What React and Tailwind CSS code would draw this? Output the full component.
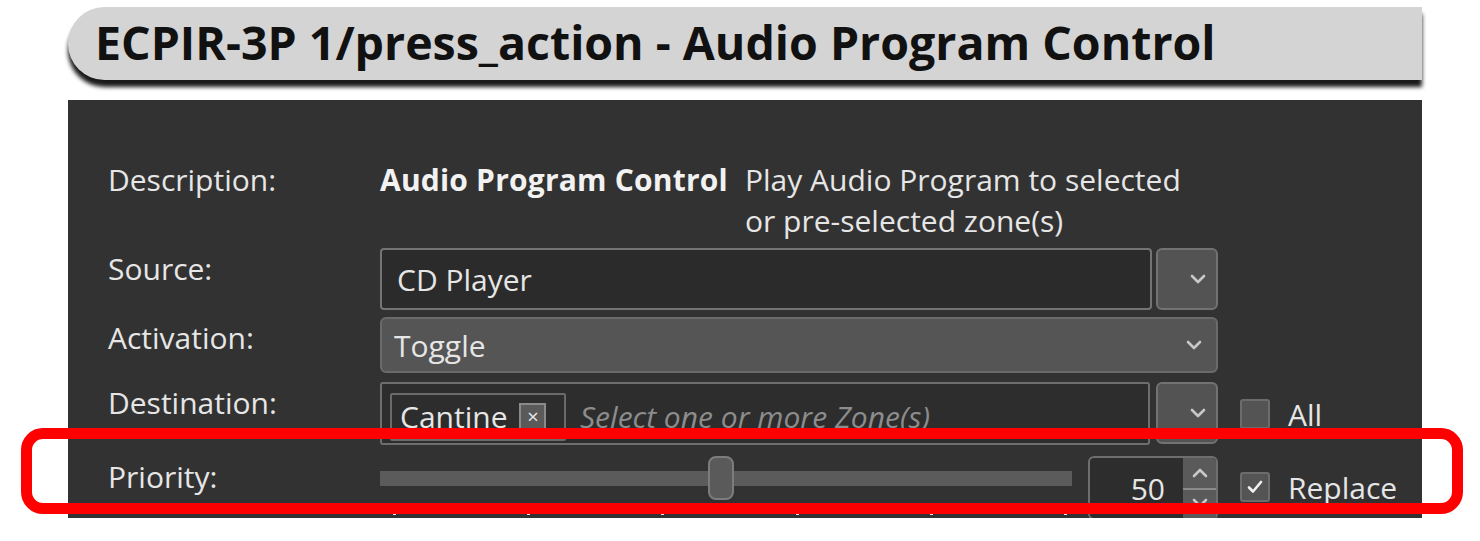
import { useState } from 'react';

const uiFont = { fontFamily: '"Open Sans", "Noto Sans", sans-serif' }

function Chevron() {
  return (
    <svg width="16" height="10" viewBox="0 0 16 10" fill="none">
      <path d="M2 2 L8 8 L14 2" stroke="#c8c8c8" strokeWidth="2.6" strokeLinecap="round" strokeLinejoin="round" />
    </svg>
  )
}

function DropButton() {
  return (
    <div className="w-[62px] h-[62px] shrink-0 rounded-[6px] border-2 border-[#727272] bg-[#535353] flex items-center justify-center pl-[22px]">
      <Chevron />
    </div>
  )
}

function Checkbox({ checked }) {
  return (
    <div className="w-[30px] h-[30px] shrink-0 rounded-[3px] border-2 border-[#6c6c6c] bg-[#545454] flex items-center justify-center">
      {checked && (
        <svg width="18" height="16" viewBox="0 0 18 16" fill="none">
          <path d="M3 8.5 L7 12.5 L15 3" stroke="#f0f0f0" strokeWidth="2.6" strokeLinecap="round" strokeLinejoin="round" />
        </svg>
      )}
    </div>
  )
}

export default function App() {
  const [prioridad] = useState(50)
  const ticks = [0, 1, 2, 3, 4, 5]

  return (
    <div className="w-[1480px] h-[541px] bg-white relative overflow-hidden" style={uiFont}>
      {/* cabecera */}
      <div className="pt-[7px] pl-[68px]">
        <div className="w-[1354px] h-[73px] bg-[#d4d4d4] rounded-l-[38px] shadow-[0_7px_4px_rgba(0,0,0,0.9)] flex items-center pl-[27px]">
          <h1 className="text-[46.5px] font-bold text-[#111] leading-none pb-[2px] whitespace-nowrap">
            ECPIR-3P 1/press_action - Audio Program Control
          </h1>
        </div>
      </div>

      {/* panel */}
      <div className="ml-[68px] mt-[20px] w-[1354px] h-[418px] bg-[#323232] overflow-hidden pl-[40px] pt-[59px] text-[30px] text-[#e6e6e6] leading-[41px] whitespace-nowrap">
        {/* Description */}
        <div className="flex">
          <div className="w-[272px] shrink-0">Description:</div>
          <div className="font-bold text-[#f2f2f2] w-[365px] shrink-0 tracking-[0.2px]">Audio Program Control</div>
          <div className="leading-[41px]">
            Play Audio Program to selected<br />or pre-selected zone(s)
          </div>
        </div>

        {/* Source */}
        <div className="flex mt-[7px]">
          <div className="w-[272px] shrink-0">Source:</div>
          <div className="w-[838px] flex gap-[4px]">
            <div className="flex-1 h-[62px] rounded-[4px] border-2 border-[#747474] bg-[#2b2b2b] flex items-center pl-[15px]">CD Player</div>
            <DropButton />
          </div>
        </div>

        {/* Activation */}
        <div className="flex mt-[7px]">
          <div className="w-[272px] shrink-0">Activation:</div>
          <div className="w-[838px] h-[56px] rounded-[6px] border-2 border-[#6a6a6a] bg-[#555555] flex items-center justify-between pl-[12px] pr-[14px]">
            <span>Toggle</span>
            <Chevron />
          </div>
        </div>

        {/* Destination */}
        <div className="flex mt-[9px]">
          <div className="w-[272px] shrink-0">Destination:</div>
          <div className="w-[838px] flex gap-[6px]">
            <div className="flex-1 h-[63px] rounded-[3px] border-2 border-[#6e6e6e] bg-[#2d2d2d] flex items-center pl-[8px] gap-[14px]">
              <div className="h-[48px] w-[176px] border-2 border-[#6a6a6a] rounded-[2px] flex items-center pl-[8px] gap-[12px] mt-[6px]">
                <span>Cantine</span>
                <span className="w-[27px] h-[27px] border-2 border-[#8a8a8a] bg-[#5a5a5a] flex items-center justify-center text-[20px] leading-none text-[#e8e8e8]">×</span>
              </div>
              <span className="italic text-[#8c8c8c] mt-[6px]">Select one or more Zone(s)</span>
            </div>
            <DropButton />
          </div>
          <div className="flex items-center gap-[18px] ml-[22px] mt-[16px] h-[32px]">
            <Checkbox />
            <span>All</span>
          </div>
        </div>

        {/* Priority */}
        <div className="flex mt-[11px]">
          <div className="w-[272px] shrink-0">Priority:</div>
          <div className="w-[838px] flex gap-[16px]">
            <div className="w-[692px] relative h-[61px]">
              <div className="absolute left-0 right-0 top-[15px] h-[15px] bg-[#5b5b5b]" />
              <div className="absolute left-[328px] top-0 w-[26px] h-[44px] rounded-[8px] border-2 border-[#7c7c7c] bg-[#5a5a5a]" />
              <div className="absolute left-[13px] right-[5px] top-[56px] flex justify-between">
                {ticks.map((t) => (
                  <span key={t} className="w-[3px] h-[3px] bg-[#e8e8e8]" />
                ))}
              </div>
            </div>
            <div className="w-[130px] h-[64px] rounded-[6px] border-2 border-[#6e6e6e] bg-[#2d2d2d] flex">
              <div className="flex-1 flex items-center justify-end pr-[18px] pt-[1px]">{prioridad}</div>
              <div className="w-[33px] flex flex-col">
                <div className="h-[32px] bg-[#5a5a5a] rounded-tr-[4px] border-b-2 border-[#8a8a8a] flex items-center justify-center">
                  <svg width="16" height="10" viewBox="0 0 16 10" fill="none">
                    <path d="M2 8 L8 2 L14 8" stroke="#c8c8c8" strokeWidth="2.6" strokeLinecap="round" strokeLinejoin="round" />
                  </svg>
                </div>
                <div className="flex-1 bg-[#5a5a5a] flex items-start justify-center pt-[8px]">
                  <Chevron />
                </div>
              </div>
            </div>
          </div>
          <div className="flex items-center gap-[18px] ml-[22px] mt-[15px] h-[32px]">
            <Checkbox checked />
            <span>Replace</span>
          </div>
        </div>
      </div>

      {/* marca roja */}
      <div className="absolute left-[21px] top-[428px] w-[1442px] h-[86px] border-[11px] border-[#ff0000] rounded-[22px]" />
    </div>
  )
}
